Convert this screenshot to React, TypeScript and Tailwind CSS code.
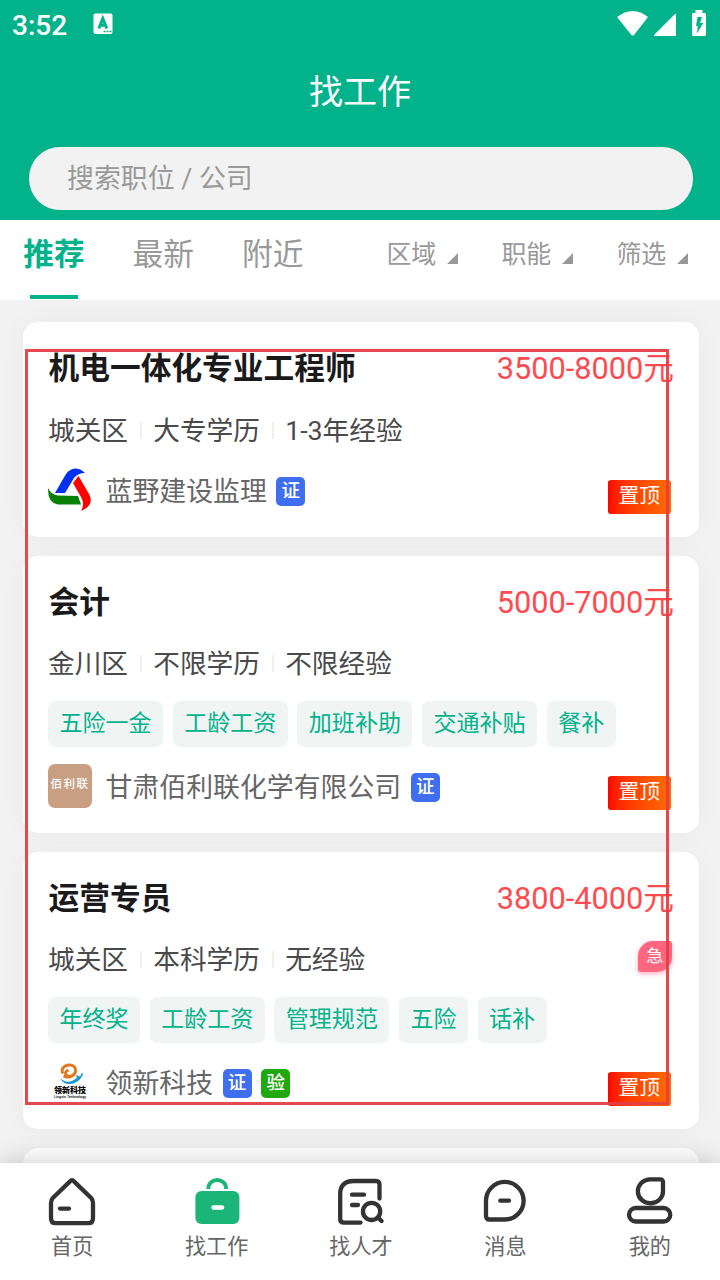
import type { ReactNode } from 'react';

type Job = {
  title: string;
  salary: string;
  meta: string[];
  tags?: string[];
  company: string;
  logo: ReactNode;
  verified?: boolean;
  urgent?: boolean;
};

function TriangleLogo() {
  return (
    <svg width="44" height="44" viewBox="0 0 44 44">
      <path d="M7 25 L18 6 Q22 0.5 28 0.5 Q33 0.8 37 5 Q30 5 26 10 L17 25Z" fill="#0030f0" />
      <path d="M25 15 L30.500 8 L41 26 Q47 37 33 43 Q37 36 33 29Z" fill="#ff0000" />
      <path d="M0.3 20 Q3 27 10 27.5 L30 28 L33 36.5 L10 36.5 Q-1 35 0.3 20Z" fill="#088008" />
    </svg>
  );
}

function BrownLogo() {
  return (
    <div className="flex h-11 w-11 items-center justify-center rounded-[7px] bg-[#c89f82] pb-[2px] text-[11.5px] font-medium tracking-[1.5px] whitespace-nowrap text-white">
      佰利联
    </div>
  );
}

function SwirlLogo() {
  return (
    <svg width="44" height="44" viewBox="0 0 44 44">
      <path d="M15 13.5 C12 8 18 4.2 23 5.2 C29 6.5 29 14 23 16 C17 17.5 15.5 11 20.5 10.5 M15.5 16 C22 19 28 15 27.5 10" fill="none" stroke="#e2761b" strokeWidth="2.8" />
      <path d="M12.5 18 C17 24 25 22 29 17.5 L27.5 15 L32 16.5 L34 12.5 L35 14 L33 18 C27 26 15 26 12.5 18Z" fill="#1b94d2" />
      <text x="6" y="33" fontSize="8" fontWeight="900" textLength="32" fill="#000">领新科技</text>
      <text x="6" y="38" fontSize="3.6" fontWeight="500" textLength="32" fill="#000">Lingxin Technology</text>
    </svg>
  );
}

const jobs: Job[] = [
  {
    title: '机电一体化专业工程师',
    salary: '3500-8000元',
    meta: ['城关区', '大专学历', '1-3年经验'],
    company: '蓝野建设监理',
    logo: <TriangleLogo />,
  },
  {
    title: '会计',
    salary: '5000-7000元',
    meta: ['金川区', '不限学历', '不限经验'],
    tags: ['五险一金', '工龄工资', '加班补助', '交通补贴', '餐补'],
    company: '甘肃佰利联化学有限公司',
    logo: <BrownLogo />,
  },
  {
    title: '运营专员',
    salary: '3800-4000元',
    meta: ['城关区', '本科学历', '无经验'],
    tags: ['年终奖', '工龄工资', '管理规范', '五险', '话补'],
    company: '领新科技',
    logo: <SwirlLogo />,
    verified: true,
    urgent: true,
  },
];

function Badge({ text, color }: { text: string; color: string }) {
  return (
    <span className={`mt-[2px] ml-[9.6px] flex h-[29px] w-[29px] items-center justify-center rounded-[5px] pt-px text-[18.5px] font-medium text-white ${color}`}>
      {text}
    </span>
  );
}

function JobCard({ job }: { job: Job }) {
  return (
    <article className="shrink-0 rounded-[15px] bg-white pt-6 pr-[25px] pb-[25px] pl-[25px] shadow-[0_0_28px_rgba(0,0,0,0.035)]">
      <div className="flex h-11 items-center justify-between pt-[3px] text-[30.72px]">
        <h2 className="pl-[0.5px] font-bold text-[#1a1a1a]">{job.title}</h2>
        <span className="text-[#ff4a50]">{job.salary}</span>
      </div>
      <div className={`mt-[18px] flex h-11 items-center text-[26.7px] text-[#4a4a4a] ${job.tags ? 'pt-px' : 'pt-[3px]'}`}>
        {job.meta.map((m, i) => (
          <div key={m} className="flex items-center">
            {i > 0 && <i className="mx-[11.6px] mb-[2px] h-[17px] w-[2px] bg-[#efefef]" />}
            <span>{m}</span>
          </div>
        ))}
        {job.urgent && (
          <span className="mr-[2px] mb-[8px] ml-auto flex h-[31px] w-[34px] items-center justify-center rounded-[3px] rounded-tl-[15px] rounded-br-[15px] bg-[#ff6680] pt-px text-[17.3px] text-white shadow-[0_2px_5px_rgba(255,102,128,0.5)]">
            急
          </span>
        )}
      </div>
      {job.tags && (
        <div className="mt-[15px] mb-[17px] flex h-[46px] gap-[9.5px]">
          {job.tags.map((t) => (
            <span key={t} className="flex items-center rounded-[7px] bg-[#f0f5f4] px-[11.52px] text-[23.04px] text-[#02b28b]">
              {t}
            </span>
          ))}
        </div>
      )}
      <div className={job.tags ? 'flex h-11 items-center' : 'mt-4 flex h-11 items-center'}>
        {job.logo}
        <span className="ml-[13.5px] pt-[5px] text-[26.88px] text-[#666]">{job.company}</span>
        <Badge text="证" color="bg-[#3f6ff0]" />
        {job.verified && <Badge text="验" color="bg-[#22a80f]" />}
        <span className="mt-[14px] mr-[3.5px] ml-auto flex h-[34px] w-[62.5px] items-center justify-center rounded-[3px] bg-linear-to-r from-[#ff0000] to-[#ff6a00] pb-px text-[20.8px] text-white">
          置顶
        </span>
      </div>
    </article>
  );
}

const stroke = { fill: 'none', stroke: '#333', strokeWidth: 4.3, strokeLinecap: 'round', strokeLinejoin: 'round' } as const;

const navItems: { label: string; icon: ReactNode }[] = [
  {
    label: '首页',
    icon: (
      <g {...stroke}>
        <path d="M22 4.4 Q24 2 26 4.4 L43.2 21 Q45 23 45 26 V41 Q45 46.2 40.5 46.2 H7.5 Q3 46.2 3 41 V26 Q3 23 4.8 21Z" />
        <path d="M12 31.6H21" />
      </g>
    ),
  },
  {
    label: '找工作',
    icon: (
      <g>
        <path d="M15.2 12 C15.2 0 33.2 0 33.2 12" fill="none" stroke="#1bb578" strokeWidth="3.8" />
        <rect x="2.4" y="14" width="44" height="33" rx="6" fill="#1bb578" />
        <path d="M20.5 30.5H29" stroke="#fff" strokeWidth="4.4" strokeLinecap="round" />
      </g>
    ),
  },
  {
    label: '找人才',
    icon: (
      <g {...stroke}>
        <path d="M42.5 21.5V7.5 Q42.5 4 39 4H16.5 Q3.2 4 3.2 17V42 Q3.2 45.6 7 45.6H23.5" />
        <path d="M15 17.7H27 M15 28H21" />
        <circle cx="34.6" cy="34.4" r="8.6" />
        <path d="M41.2 40.8L44.6 44" />
      </g>
    ),
  },
  {
    label: '消息',
    icon: (
      <g {...stroke}>
        <path d="M5 23.7 A18.8 18.8 0 1 1 23.8 42.5 H8.500 Q5 42.5 5 39Z" />
        <path d="M19.3 23.7H28" />
      </g>
    ),
  },
  {
    label: '我的',
    icon: (
      <g {...stroke}>
        <path d="M23.5 2.300H34 Q37 2.300 37 5.300V13.800 A12.600 12 0 1 1 23.5 2.300Z" />
        <rect x="3" y="31" width="41.3" height="13.5" rx="6.7" />
      </g>
    ),
  },
];

export default function App() {
  return (
    <div className="relative flex h-[1280px] w-[720px] flex-col overflow-hidden bg-[#f2f2f2] font-[Roboto,'Noto_Sans_CJK_SC',sans-serif] leading-none">
      <header className="flex h-[220px] shrink-0 flex-col bg-[#02b28b] text-white">
        <div className="flex h-[50px] items-center pr-[14px] pl-3">
          <span className="w-[55px] pt-px text-[28px] font-medium">3:52</span>
          <svg className="mb-[2px] ml-[26px]" width="21" height="22" viewBox="0 0 21 22">
            <rect x="0.5" y="0.5" width="19" height="20.5" rx="2" fill="#fff" />
            <path d="M5.8 15.5 L9.8 5.500 L13.8 15.5 M7.2 12.3H12.5" fill="none" stroke="#02b28b" strokeWidth="3" />
            <path d="M10.5 18.5h2m1 0h2m1 0h2" stroke="#02b28b" strokeWidth="1.6" />
          </svg>
          <svg className="mb-[4px] ml-auto" width="90" height="30" viewBox="616 8 90 30">
            <path d="M617 25 Q633 13 648 25 L634 43 Q632.7 44 631.4 43Z" transform="translate(0 -8)" fill="#fff" />
            <path d="M676 15V35 Q676 36 675 36H655 Q653 36 654.5 34.5L674.5 14.5 Q676 13 676 15Z" fill="#fff" />
            <path d="M695.5 10h7v3h2q1.5 0 1.5 1.5V34.5q0 1.5-1.5 1.5h-11q-1.5 0-1.5-1.5V14.5q0-1.5 1.5-1.5h2Z" fill="#fff" />
            <path d="M697.5 17h4.5l-2 6h3.3L697 33.5l.8-7.500H696Z" fill="#02b28b" />
          </svg>
        </div>
        <h1 className="mt-[19px] text-center text-[34px] leading-[46px] font-normal">找工作</h1>
        <div className="mt-[32px] mr-[27px] ml-[29px] flex h-[63px] items-center rounded-[31px] bg-[#f2f2f2] pt-px pl-[38px] text-[26.88px] text-[#999]">
          搜索职位 / 公司
        </div>
      </header>

      <nav className="flex h-20 shrink-0 bg-white pl-[23px] text-[30.72px] whitespace-nowrap text-[#999]">
        <div className="flex w-[62px] shrink-0 flex-col items-center font-bold text-[#02b28b]">
          <span className="h-[75px] leading-[70px]">推荐</span>
          <i className="h-1 w-12 bg-[#02b28b]" />
        </div>
        <span className="ml-[47.500px] shrink-0 leading-[70px]">最新</span>
        <span className="ml-[48px] shrink-0 leading-[70px]">附近</span>
        <div className="ml-[83px] flex h-[67px] shrink-0 items-center text-[24.96px]">
          {['区域', '职能', '筛选'].map((f) => (
            <div key={f} className="flex w-[115px] items-center">
              <span className="pt-[3px]">{f}</span>
              <svg className="mt-[11px] ml-[11px]" width="11" height="11" viewBox="0 0 11 11">
                <path d="M11 0V11H0Z" fill="#999" />
              </svg>
            </div>
          ))}
        </div>
      </nav>

      <main className="flex min-h-0 flex-1 flex-col gap-[19px] overflow-hidden pt-[22px] pr-[21px] pl-[23px]">
        {jobs.map((j) => (
          <JobCard key={j.title} job={j} />
        ))}
        <div className="h-[200px] shrink-0 rounded-[15px] bg-white shadow-[0_0_28px_rgba(0,0,0,0.035)]" />
      </main>

      <footer className="relative h-[117px] shrink-0 bg-white pt-[14px] shadow-[0_0_24px_rgba(0,0,0,0.2)]">
        <div className="grid w-[722px] grid-cols-5">
          {navItems.map((n) => (
            <div key={n.label} className="flex flex-col items-center text-[21.12px] text-[#666]">
              <svg width="48" height="48" viewBox="0 0 48 48" overflow="visible">{n.icon}</svg>
              <span className="mt-[5px] leading-[34px]">{n.label}</span>
            </div>
          ))}
        </div>
      </footer>

      <div className="pointer-events-none absolute top-[349px] left-[25px] h-[756px] w-[644px] border-[3px] border-[#e43f43]/95" />
    </div>
  );
}
